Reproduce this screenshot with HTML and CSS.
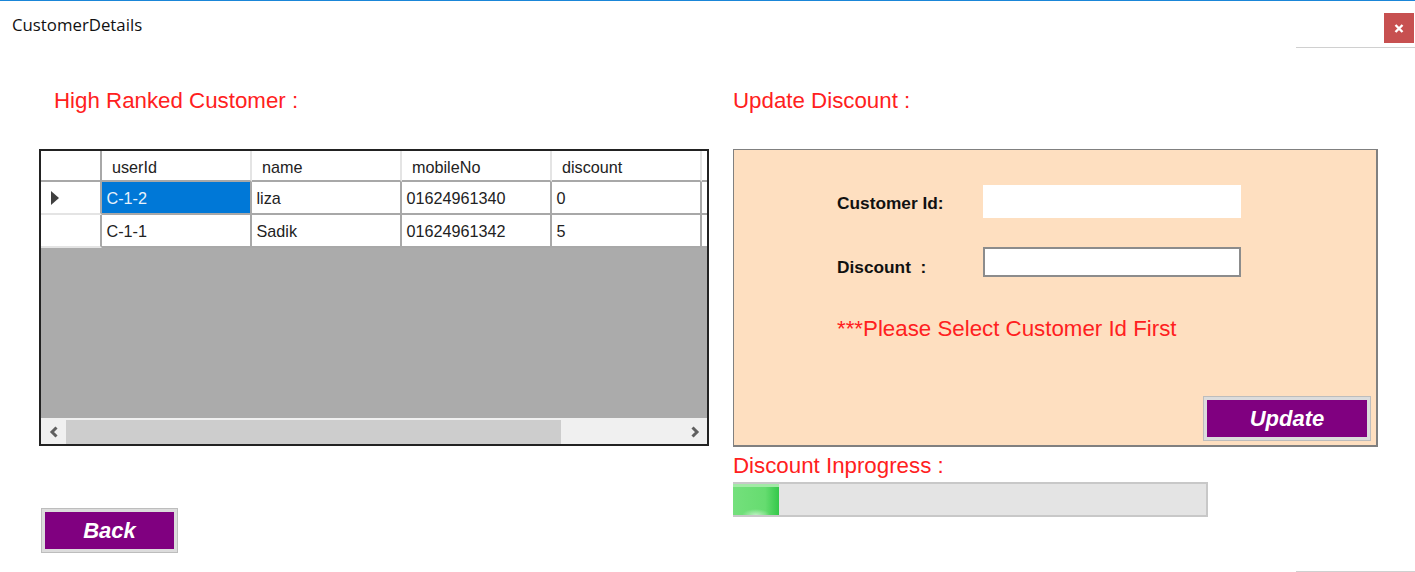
FILE: index.html
```html
<!DOCTYPE html>
<html lang="en">
<head>
  <meta charset="UTF-8" />
  <title>CustomerDetails</title>
  <link rel="stylesheet" href="styles.css">
</head>
<body>

<header class="titlebar">
  <span class="title">CustomerDetails</span>
  <button class="close" type="button" aria-label="Close">
    <svg width="10" height="9" viewBox="0 0 10 9"><path d="M1.5 1 L8.5 8 M8.5 1 L1.5 8" stroke="#fff" stroke-width="2.4" fill="none" /></svg>
  </button>
</header>
<div class="edge-line"></div>

<main class="content">
  <section class="left">
    <h2 class="heading heading-left">High Ranked Customer :</h2>

    <div class="grid-box">
      <table class="grid">
        <thead>
          <tr>
            <th class="row-head"></th>
            <th>userId</th>
            <th>name</th>
            <th>mobileNo</th>
            <th>discount</th>
            <th class="stub"></th>
          </tr>
        </thead>
        <tbody>
          <tr>
            <td class="row-head">
              <svg class="row-arrow" width="8" height="14" viewBox="0 0 8 14"><path d="M0 0 L8 7 L0 14 Z" fill="#404040" /></svg>
            </td>
            <td class="selected">C-1-2</td>
            <td>liza</td>
            <td>01624961340</td>
            <td>0</td>
            <td class="stub"></td>
          </tr>
          <tr>
            <td class="row-head"></td>
            <td>C-1-1</td>
            <td>Sadik</td>
            <td>01624961342</td>
            <td>5</td>
            <td class="stub"></td>
          </tr>
        </tbody>
      </table>
      <div class="grid-empty"></div>
      <div class="scrollbar">
        <div class="scroll-btn">
          <svg width="10" height="12" viewBox="0 0 10 12"><path d="M7.5 1.5 L3 6 L7.5 10.5" stroke="#606060" stroke-width="3" fill="none" /></svg>
        </div>
        <div class="scroll-thumb"></div>
        <div class="scroll-btn scroll-btn-right">
          <svg width="10" height="12" viewBox="0 0 10 12"><path d="M2.5 1.5 L7 6 L2.5 10.5" stroke="#606060" stroke-width="3" fill="none" /></svg>
        </div>
      </div>
    </div>

    <button class="action back" type="button">Back</button>
  </section>

  <section class="right">
    <h2 class="heading">Update Discount :</h2>

    <form class="panel">
      <div class="field">
        <label for="customerId">Customer Id:</label>
        <input class="input-flat" type="text" id="customerId" />
      </div>
      <div class="field field-second">
        <label class="label-low" for="discount">Discount &nbsp;:</label>
        <input class="input-box" type="text" id="discount" />
      </div>
      <p class="warning">***Please Select Customer Id First</p>
      <button class="action update" type="button">Update</button>
    </form>

    <p class="progress-label">Discount Inprogress :</p>
    <div class="progress">
      <div class="progress-fill" style="width: 46px"></div>
    </div>
  </section>
</main>

<div class="edge-line edge-bottom"></div>

</body>
</html>
```

FILE: styles.css
```css
* {
  box-sizing: border-box;
}
html, body {
  height: 572px;
  overflow: hidden;
}
body {
  margin: 0;
  display: flex;
  flex-direction: column;
  background: white;
  border-top: 1px solid #1a86d8;
  font-family: "Liberation Sans", Arial, sans-serif;
}
.titlebar {
  height: 46px;
  display: flex;
  justify-content: space-between;
  padding: 12px 1px 0 12px;
}
.title {
  font-family: "Open Sans", sans-serif;
  font-size: 16.8px;
  line-height: 24px;
  color: #111;
}
.close {
  width: 30px;
  height: 30px;
  padding: 0;
  border: none;
  background: #c75050;
  display: flex;
  align-items: center;
  justify-content: center;
}
.edge-line {
  width: 119px;
  height: 1px;
  margin-left: auto;
  background: #d0d0d0;
}
.edge-bottom {
  margin-top: auto;
}
.content {
  display: grid;
  grid-template-columns: 670px 645px;
  gap: 24px;
  padding: 38px 0 0 39px;
}
.heading {
  margin: 0 0 33px;
  font-size: 22.3px;
  line-height: 30px;
  font-weight: normal;
  color: #ff2020;
}
.heading-left {
  padding-left: 15px;
}

/* data grid */
.grid-box {
  height: 297px;
  display: flex;
  flex-direction: column;
  border: 2px solid #222;
  background: #ababab;
}
.grid {
  width: 100%;
  table-layout: fixed;
  border-collapse: separate;
  border-spacing: 0;
  background: white;
  font-size: 16.2px;
  color: #222;
}
.grid th, .grid td {
  width: 150px;
  padding: 0 0 0 4.5px;
  border-right: 2px solid #a8a8a8;
  border-bottom: 2px solid #a8a8a8;
  text-align: left;
  font-weight: normal;
  white-space: nowrap;
}
.grid th {
  height: 31px;
  padding: 4px 0 0 10px;
  border-right-color: #e4e4e4;
}
.grid td {
  height: 33px;
  padding-top: 1px;
}
.grid .row-head {
  width: 61px;
  padding: 0 0 0 10px;
  border-right-color: #a8a8a8;
  border-bottom-color: #e4e4e4;
}
.grid thead .row-head {
  border-bottom-color: #a8a8a8;
}
.grid .stub {
  width: auto;
  padding: 0;
  border-right: none;
}
.grid .selected {
  background: #0078d7;
  color: #e8f2fb;
}
.row-arrow {
  display: block;
}
.grid-empty {
  flex: 1;
}
.scrollbar {
  height: 26px;
  display: flex;
  background: #f0f0f0;
  border-top: 2px solid #f0f0f0;
}
.scroll-btn {
  width: 25px;
  display: flex;
  align-items: center;
  justify-content: center;
}
.scroll-thumb {
  width: 495px;
  background: #cdcdcd;
}
.scroll-btn-right {
  margin-left: auto;
}

/* buttons */
.action {
  display: block;
  padding: 1px 0 0;
  border: 1px solid #bdbdbd;
  box-shadow: inset 0 0 0 3px #dcdcdc;
  background: #800080;
  color: white;
  font-family: "Liberation Sans", Arial, sans-serif;
  font-size: 22px;
  font-weight: bold;
  font-style: italic;
}
.back {
  width: 137px;
  height: 45px;
  margin: 62px 0 0 2px;
}
.update {
  width: 168px;
  height: 45px;
  margin: auto 5px 4px auto;
}

/* discount panel */
.panel {
  height: 298px;
  display: flex;
  flex-direction: column;
  padding: 35px 0 0 103px;
  border: 2px solid #808080;
  border-width: 1px 2px 2px 1px;
  background: #fedfc0;
}
.field {
  height: 33px;
  display: flex;
}
.field-second {
  margin-top: 29px;
}
.field label {
  width: 146px;
  font-size: 17.3px;
  line-height: 37px;
  font-weight: bold;
  color: #111;
}
.field .label-low {
  line-height: 40px;
}
.input-flat, .input-box {
  width: 258px;
  padding: 0 4px;
  background: white;
  outline: none;
}
.input-flat {
  height: 33px;
  border: none;
}
.input-box {
  height: 30px;
  border: 2px solid #8c8c8c;
}
.warning {
  margin: 34px 0 0;
  font-size: 22.3px;
  line-height: 30px;
  color: #ff2020;
}
.progress-label {
  margin: 4px 0 1px;
  font-size: 22.3px;
  line-height: 30px;
  color: #ff2020;
}
.progress {
  width: 475px;
  height: 35px;
  border: 2px solid #c8c8c8;
  border-left: none;
  background: #e4e4e4;
}
.progress-fill {
  height: 100%;
  background:
    radial-gradient(ellipse 14px 6px at 50% 100%, rgba(255,255,255,0.55), transparent),
    linear-gradient(to right, #74e07c, #66dc70 70%, #34c84a);
  border-top: 3px solid #a2eaa6;
}
```
